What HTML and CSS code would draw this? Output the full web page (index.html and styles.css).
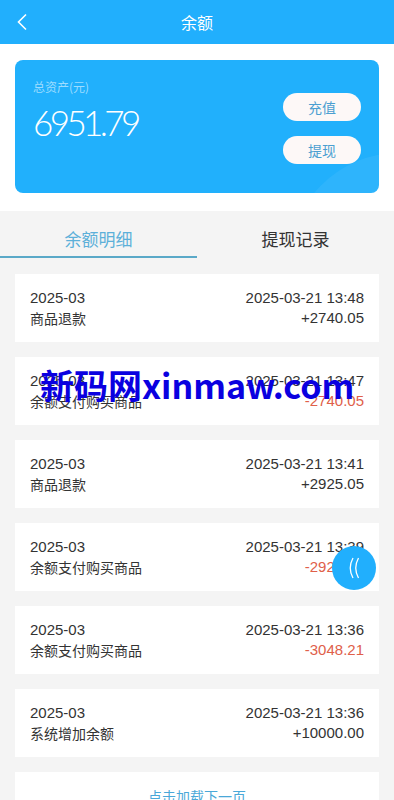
FILE: index.html
```html
<!DOCTYPE html>
<html lang="zh-CN">
<head>
  <meta charset="UTF-8" />
  <meta name="viewport" content="width=device-width, initial-scale=1.0" />
  <title>余额</title>
  <link rel="stylesheet" href="styles.css">
</head>
<body>
  <div class="topbar">
    <a class="back" href="#">
      <svg width="12" height="18" viewBox="0 0 12 18"><path d="M10 1.5 L2.5 9 L10 16.5" fill="none" stroke="#fff" stroke-width="1.6" /></svg>
    </a>
    <h1>余额</h1>
  </div>

  <div class="wallet">
    <div class="wallet-card">
      <div class="wallet-info">
        <p class="wallet-label">总资产(元)</p>
        <p class="wallet-amount">6951.79</p>
      </div>
      <div class="wallet-actions">
        <a href="#" class="pill">充值</a>
        <a href="#" class="pill">提现</a>
      </div>
    </div>
  </div>

  <div class="tabs">
    <a href="#" class="tab active">余额明细</a>
    <a href="#" class="tab">提现记录</a>
  </div>

  <div class="records">
    <div class="record">
      <div class="record-row"><span>2025-03</span><span>2025-03-21 13:48</span></div>
      <div class="record-row"><span class="cn">商品退款</span><span>+2740.05</span></div>
    </div>
    <div class="record">
      <div class="record-row"><span>2025-03</span><span>2025-03-21 13:47</span></div>
      <div class="record-row"><span class="cn">余额支付购买商品</span><span class="minus">-2740.05</span></div>
    </div>
    <div class="record">
      <div class="record-row"><span>2025-03</span><span>2025-03-21 13:41</span></div>
      <div class="record-row"><span class="cn">商品退款</span><span>+2925.05</span></div>
    </div>
    <div class="record">
      <div class="record-row"><span>2025-03</span><span>2025-03-21 13:39</span></div>
      <div class="record-row"><span class="cn">余额支付购买商品</span><span class="minus">-2925.05</span></div>
    </div>
    <div class="record">
      <div class="record-row"><span>2025-03</span><span>2025-03-21 13:36</span></div>
      <div class="record-row"><span class="cn">余额支付购买商品</span><span class="minus">-3048.21</span></div>
    </div>
    <div class="record">
      <div class="record-row"><span>2025-03</span><span>2025-03-21 13:36</span></div>
      <div class="record-row"><span class="cn">系统增加余额</span><span>+10000.00</span></div>
    </div>
    <div class="load-more"><a href="#">点击加载下一页</a></div>
  </div>

  <a href="#" class="float-btn">
    <svg width="16" height="24" viewBox="0 0 16 24"><path d="M7 2 Q1.5 12 7 22 M12.5 2 Q7 12 12.5 22" fill="none" stroke="#fff" stroke-width="1.3" /></svg>
  </a>

  <div class="watermark">新码网xinmaw.com</div>
</body>
</html>
```

FILE: styles.css
```css
body {
  margin: 0;
  font-family: 'Noto Sans CJK SC', 'Noto Sans', sans-serif;
  background-color: #f4f4f4;
  color: #333;
  position: relative;
}
a {
  text-decoration: none;
}
p {
  margin: 0;
}
.topbar {
  height: 44px;
  background-color: #21affd;
  display: flex;
  align-items: center;
  justify-content: center;
  position: relative;
}
.topbar h1 {
  margin: 0;
  font-size: 16px;
  font-weight: normal;
  color: #fff;
}
.back {
  position: absolute;
  left: 16px;
  top: 12px;
}
.wallet {
  background: #fff;
  padding: 16px 15px 18px;
}
.wallet-card {
  position: relative;
  overflow: hidden;
  height: 133px;
  box-sizing: border-box;
  background-color: #21b0fc;
  border-radius: 8px;
  padding: 19px 18px 0 18px;
  display: flex;
  justify-content: space-between;
}
.wallet-card::after {
  content: "";
  position: absolute;
  width: 220px;
  height: 220px;
  border-radius: 50%;
  right: -130px;
  bottom: -180px;
  background: rgba(255, 255, 255, 0.06);
}
.wallet-label {
  font-size: 12px;
  color: #9ddcff;
  line-height: 16px;
}
.wallet-amount {
  font-family: 'Lato', sans-serif;
  font-weight: 300;
  font-size: 35px;
  letter-spacing: -3.6px;
  color: #fff;
  line-height: 40px;
  margin-top: 7px;
}
.wallet-actions {
  display: flex;
  flex-direction: column;
  gap: 15px;
  padding-top: 14px;
}
.pill {
  width: 78px;
  height: 28px;
  line-height: 28px;
  border-radius: 14px;
  background: #fdf8f7;
  color: #4b9fd1;
  font-size: 14px;
  text-align: center;
}
.tabs {
  display: flex;
  height: 47px;
  background: #f4f4f4;
}
.tab {
  flex: 1;
  text-align: center;
  padding-top: 10px;
  line-height: 35px;
  font-size: 17px;
  color: #333;
  border-bottom: 2px solid transparent;
}
.tab.active {
  color: #5cb0d9;
  border-bottom-color: #5aa9c8;
}
.records {
  padding: 16px 15px 0;
}
.record {
  background: #fff;
  height: 68px;
  box-sizing: border-box;
  padding: 14px 15px;
  margin-bottom: 15px;
}
.record-row {
  display: flex;
  justify-content: space-between;
  font-size: 15px;
  line-height: 20px;
  font-family: 'Liberation Sans', 'Noto Sans CJK SC', sans-serif;
}
.record-row .cn {
  font-family: 'Noto Sans CJK SC', sans-serif;
  font-size: 14px;
}
.minus {
  color: #e0604a;
}
.load-more {
  background: #fff;
  height: 60px;
  padding-top: 14px;
  box-sizing: border-box;
  text-align: center;
  font-size: 14px;
}
.load-more a {
  color: #4aa8d8;
}
.float-btn {
  position: absolute;
  left: 332px;
  top: 546px;
  width: 44px;
  height: 44px;
  border-radius: 50%;
  background: #21affd;
  display: flex;
  align-items: center;
  justify-content: center;
}
.watermark {
  position: absolute;
  left: 40px;
  top: 365px;
  font-family: 'Noto Sans CJK SC', sans-serif;
  font-weight: bold;
  font-size: 34px;
  line-height: 40px;
  color: #0a00e0;
  white-space: nowrap;
}
```
